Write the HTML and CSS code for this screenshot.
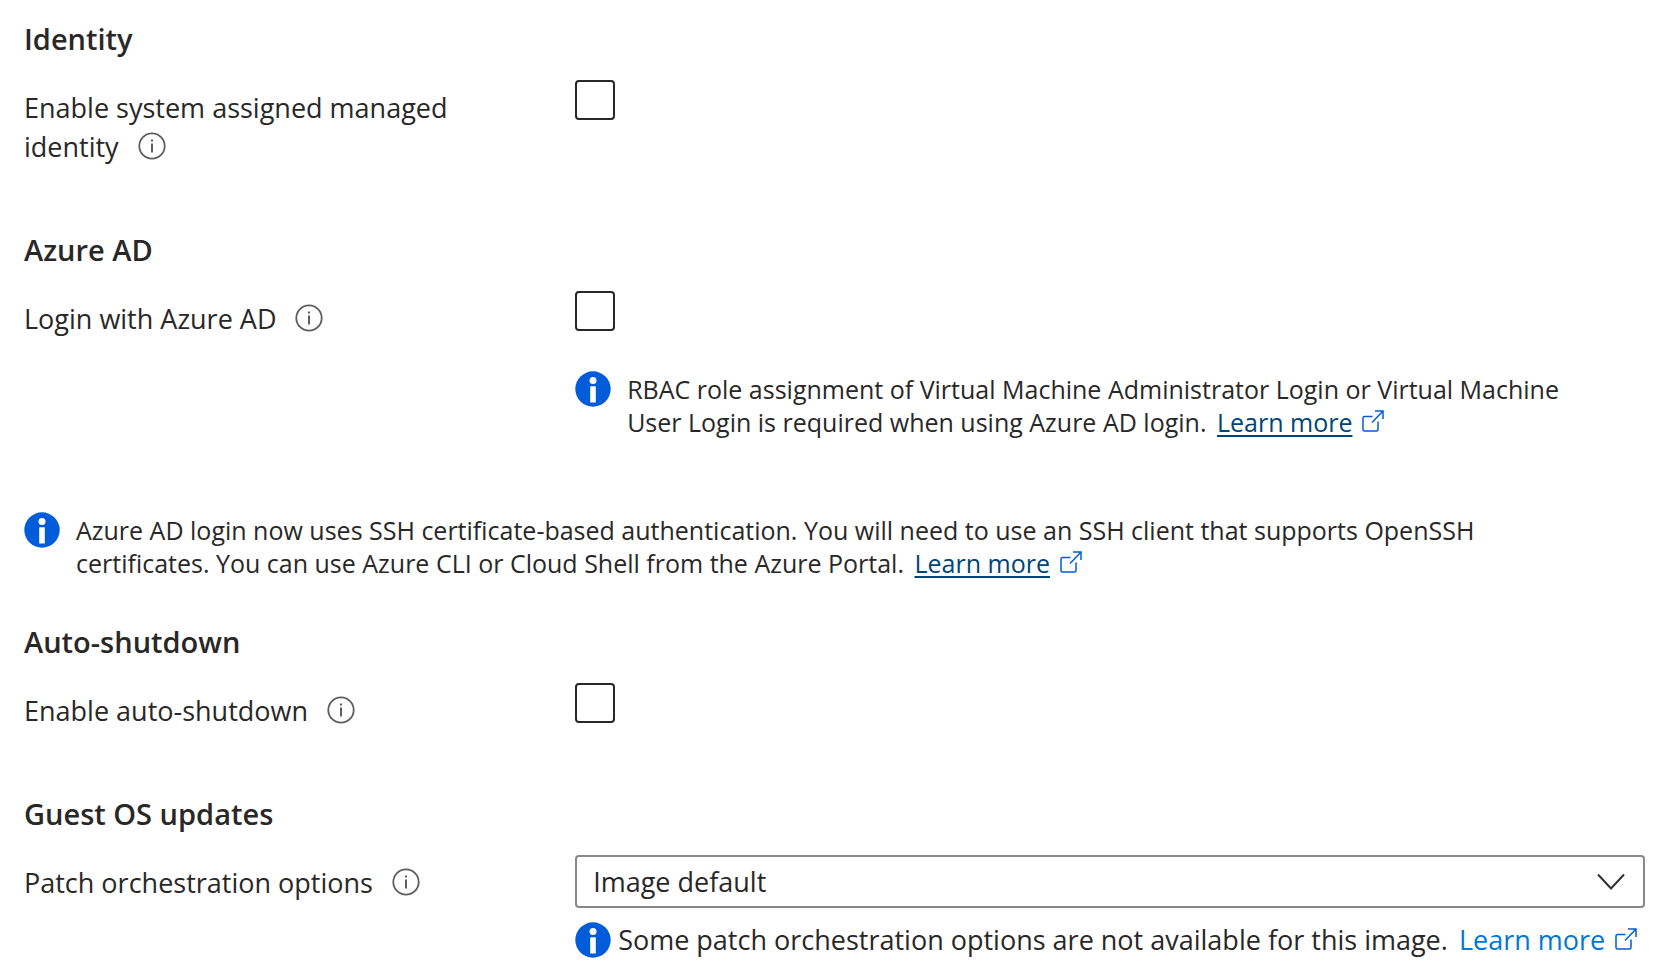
FILE: index.html
```html
<!DOCTYPE html>
<html lang="en">
<head>
<meta charset="utf-8">
<title>Management</title>
<meta name="viewport" content="width=device-width, initial-scale=1">
<link rel="stylesheet" href="styles.css">
</head>
<body>
<svg class="sprite" aria-hidden="true">
  <symbol id="hint" viewBox="0 0 28 28">
    <circle cx="14" cy="14" r="12.7" fill="none" stroke="#605e5c" stroke-width="1.8"/>
    <rect x="13" y="7.5" width="2" height="2" fill="#605e5c"/>
    <rect x="13" y="11.5" width="2" height="9" fill="#605e5c"/>
  </symbol>
  <symbol id="info" viewBox="0 0 36 36">
    <circle cx="18" cy="18" r="17.7" fill="#015cda"/>
    <circle cx="18" cy="9.4" r="3.5" fill="#fff"/>
    <rect x="15.2" y="15.2" width="5.6" height="16.3" rx="0.6" fill="#fff"/>
  </symbol>
  <symbol id="external" viewBox="0 0 22 22">
    <path d="M10.5 6.5H2.5Q1 6.5 1 8V19.5Q1 21 2.5 21H14.5Q16 21 16 19.5V11.5M10 12.5L20.8 1.2M13 1H21V9" fill="none" stroke="#015cda" stroke-width="1.5"/>
  </symbol>
</svg>
<form class="form">
  <section class="section">
    <h2 class="heading">Identity</h2>
    <div class="field">
      <div class="label"><label for="identity">Enable system assigned managed identity</label><svg class="hint" role="img" aria-label="More information"><use href="#hint"/></svg></div>
      <input class="check" type="checkbox" id="identity">
    </div>
  </section>
  <section class="section">
    <h2 class="heading">Azure AD</h2>
    <div class="field">
      <div class="label"><label for="aad">Login with Azure AD</label><svg class="hint" role="img" aria-label="More information"><use href="#hint"/></svg></div>
      <div class="control">
        <input class="check" type="checkbox" id="aad">
        <div class="banner">
          <svg class="info" aria-hidden="true"><use href="#info"/></svg>
          <p class="message">RBAC role assignment of Virtual Machine Administrator Login or Virtual Machine User Login is required when using Azure AD login. <a class="link" href="#">Learn more</a><svg class="external" aria-hidden="true"><use href="#external"/></svg></p>
        </div>
      </div>
    </div>
  </section>
  <div class="banner notice">
    <svg class="info" aria-hidden="true"><use href="#info"/></svg>
    <p class="message">Azure AD login now uses SSH certificate-based authentication. You will need to use an SSH client that supports OpenSSH certificates. You can use Azure CLI or Cloud Shell from the Azure Portal. <a class="link" href="#">Learn more</a><svg class="external" aria-hidden="true"><use href="#external"/></svg></p>
  </div>
  <section class="section">
    <h2 class="heading">Auto-shutdown</h2>
    <div class="field">
      <div class="label"><label for="shutdown">Enable auto-shutdown</label><svg class="hint" role="img" aria-label="More information"><use href="#hint"/></svg></div>
      <input class="check" type="checkbox" id="shutdown">
    </div>
  </section>
  <section class="section">
    <h2 class="heading">Guest OS updates</h2>
    <div class="field">
      <div class="label"><label for="patch">Patch orchestration options</label><svg class="hint" role="img" aria-label="More information"><use href="#hint"/></svg></div>
      <div class="control">
        <div class="dropdown">
          <select class="select" id="patch"><option>Image default</option></select>
          <svg class="chevron" viewBox="0 0 28 18" aria-hidden="true"><path d="M1 1.5L14 15.5L27 1.5" fill="none" stroke="#323130" stroke-width="2"/></svg>
        </div>
        <div class="status">
          <svg class="info" aria-hidden="true"><use href="#info"/></svg>
          <p class="note">Some patch orchestration options are not available for this image. <a class="link plain" href="#">Learn more</a><svg class="external" aria-hidden="true"><use href="#external"/></svg></p>
        </div>
      </div>
    </div>
  </section>
</form>
</body>
</html>
```
FILE: styles.css
```css
* { box-sizing: border-box; }

body {
  margin: 0;
  background: #fff;
  color: #292827;
  font-family: "Open Sans", "Noto Sans", sans-serif;
  font-size: 27px;
  line-height: 39px;
}

.sprite { position: absolute; width: 0; height: 0; }

.form { padding: 19px 27px 0 24px; }

.section { margin-bottom: 64px; }
.section:last-child { margin-bottom: 0; }

.heading {
  margin: 0 0 22px;
  font-size: 29px;
  font-weight: 600;
  line-height: 39px;
}

.field {
  display: grid;
  grid-template-columns: minmax(0, 34fr) minmax(0, 66fr);
}

.label {
  max-width: 440px;
  padding-top: 8px;
}

.hint {
  width: 28px;
  height: 28px;
  margin-left: 19px;
  vertical-align: -3px;
}

.check {
  display: block;
  appearance: none;
  width: 40px;
  height: 40px;
  margin: 0;
  border: 2px solid #292827;
  border-radius: 4px;
  background: #fff;
}

.banner {
  display: flex;
  gap: 16px;
  margin-top: 40px;
}

.notice { margin: 73px 0 42px; }

.info {
  flex: none;
  width: 36px;
  height: 36px;
}

.message {
  margin: 0;
  padding: 2px 48px 0 0;
  font-size: 25px;
  line-height: 33px;
}

.link {
  margin-left: 4px;
  color: #004578;
  text-decoration: underline;
  text-decoration-thickness: 2px;
  text-underline-offset: 3px;
}

.plain { color: #0078d4; text-decoration: none; }

.external {
  width: 22px;
  height: 22px;
  margin-left: 10px;
}

.dropdown {
  display: grid;
  align-items: center;
}

.select {
  grid-area: 1 / 1;
  appearance: none;
  width: 100%;
  height: 53px;
  padding: 0 60px 0 16px;
  border: 2px solid #8a8886;
  border-radius: 4px;
  background: #fff;
  color: inherit;
  font: inherit;
}

.chevron {
  grid-area: 1 / 1;
  justify-self: end;
  width: 28px;
  height: 18px;
  margin-right: 20px;
  pointer-events: none;
}

.status {
  display: flex;
  align-items: center;
  gap: 7px;
  margin-top: 12px;
}

.note { margin: 0; }
```
